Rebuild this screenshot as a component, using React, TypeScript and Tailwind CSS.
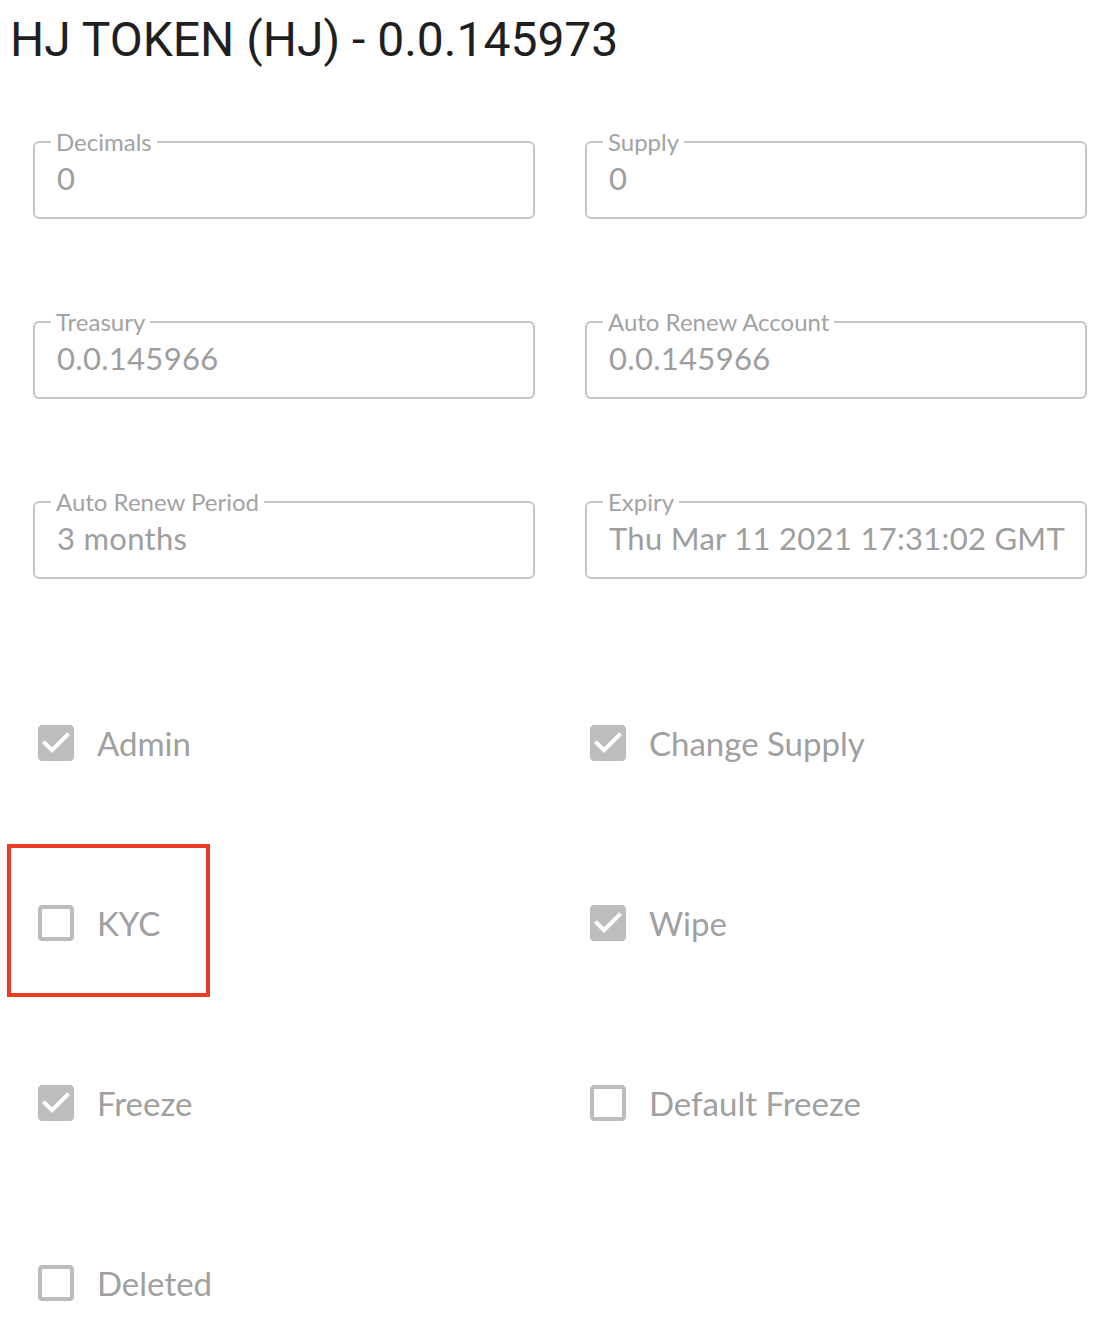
interface FieldProps {
  label: string
  value: string
}

function OutlinedField({ label, value }: FieldProps) {
  return (
    <div className="relative h-[78px] rounded-[6px] border-2 border-[#c6c6c6] pl-[22px] pr-[6px] pt-[17px]">
      <span className="absolute -top-[15px] left-[16px] bg-white px-[5px] text-[24px] leading-[28px] text-[#a3a3a3]">
        {label}
      </span>
      <div className="whitespace-nowrap text-[31px] leading-[37px] tracking-[0.3px] text-[#9e9e9e]">{value}</div>
    </div>
  )
}

interface FlagProps {
  label: string
  checked: boolean
  highlight?: boolean
}

function CheckIcon({ checked }: { checked: boolean }) {
  return (
    <svg viewBox="0 0 24 24" className="-ml-[6px] h-[48px] w-[48px] shrink-0 fill-[#bdbdbd]">
      {checked ? (
        <path d="M19 3H5c-1.11 0-2 .9-2 2v14c0 1.1.89 2 2 2h14c1.11 0 2-.9 2-2V5c0-1.1-.89-2-2-2zm-9 14l-5-5 1.41-1.41L10 14.17l7.59-7.59L19 8l-9 9z" />
      ) : (
        <path d="M19 5v14H5V5h14m0-2H5c-1.1 0-2 .9-2 2v14c0 1.1.9 2 2 2h14c1.1 0 2-.9 2-2V5c0-1.1-.9-2-2-2z" />
      )}
    </svg>
  )
}

function Flag({ label, checked, highlight }: FlagProps) {
  return (
    <div className="relative flex h-[180px] items-center pl-[5px]">
      <CheckIcon checked={checked} />
      <span className="ml-[17px] text-[33px] leading-none text-[#a0a0a0]">{label}</span>
      {highlight && (
        <div className="pointer-events-none absolute -left-[26px] top-[11px] h-[153px] w-[203px] border-4 border-[#ec3b23]" />
      )}
    </div>
  )
}

const fields: FieldProps[] = [
  { label: 'Decimals', value: '0' },
  { label: 'Supply', value: '0' },
  { label: 'Treasury', value: '0.0.145966' },
  { label: 'Auto Renew Account', value: '0.0.145966' },
  { label: 'Auto Renew Period', value: '3 months' },
  { label: 'Expiry', value: 'Thu Mar 11 2021 17:31:02 GMT' },
]

const flags: FlagProps[] = [
  { label: 'Admin', checked: true },
  { label: 'Change Supply', checked: true },
  { label: 'KYC', checked: false, highlight: true },
  { label: 'Wipe', checked: true },
  { label: 'Freeze', checked: true },
  { label: 'Default Freeze', checked: false },
  { label: 'Deleted', checked: false },
]

export default function App() {
  return (
    <div className="min-h-screen bg-white font-['Lato',sans-serif]">
      <h1 className="pl-[10px] pt-[12px] font-['Roboto',sans-serif] text-[48px] font-normal leading-[56px] text-[#1f1f1f]">
        HJ TOKEN (HJ) - 0.0.145973
      </h1>

      <div className="pl-[33px] pr-[21px]">
        <div className="mt-[73px] grid grid-cols-2 gap-x-[50px] gap-y-[102px]">
          {fields.map((f) => (
            <OutlinedField key={f.label} {...f} />
          ))}
        </div>

        <div className="mt-[74px] grid grid-cols-2 gap-x-[50px]">
          {flags.map((f) => (
            <Flag key={f.label} {...f} />
          ))}
        </div>
      </div>
    </div>
  )
}
